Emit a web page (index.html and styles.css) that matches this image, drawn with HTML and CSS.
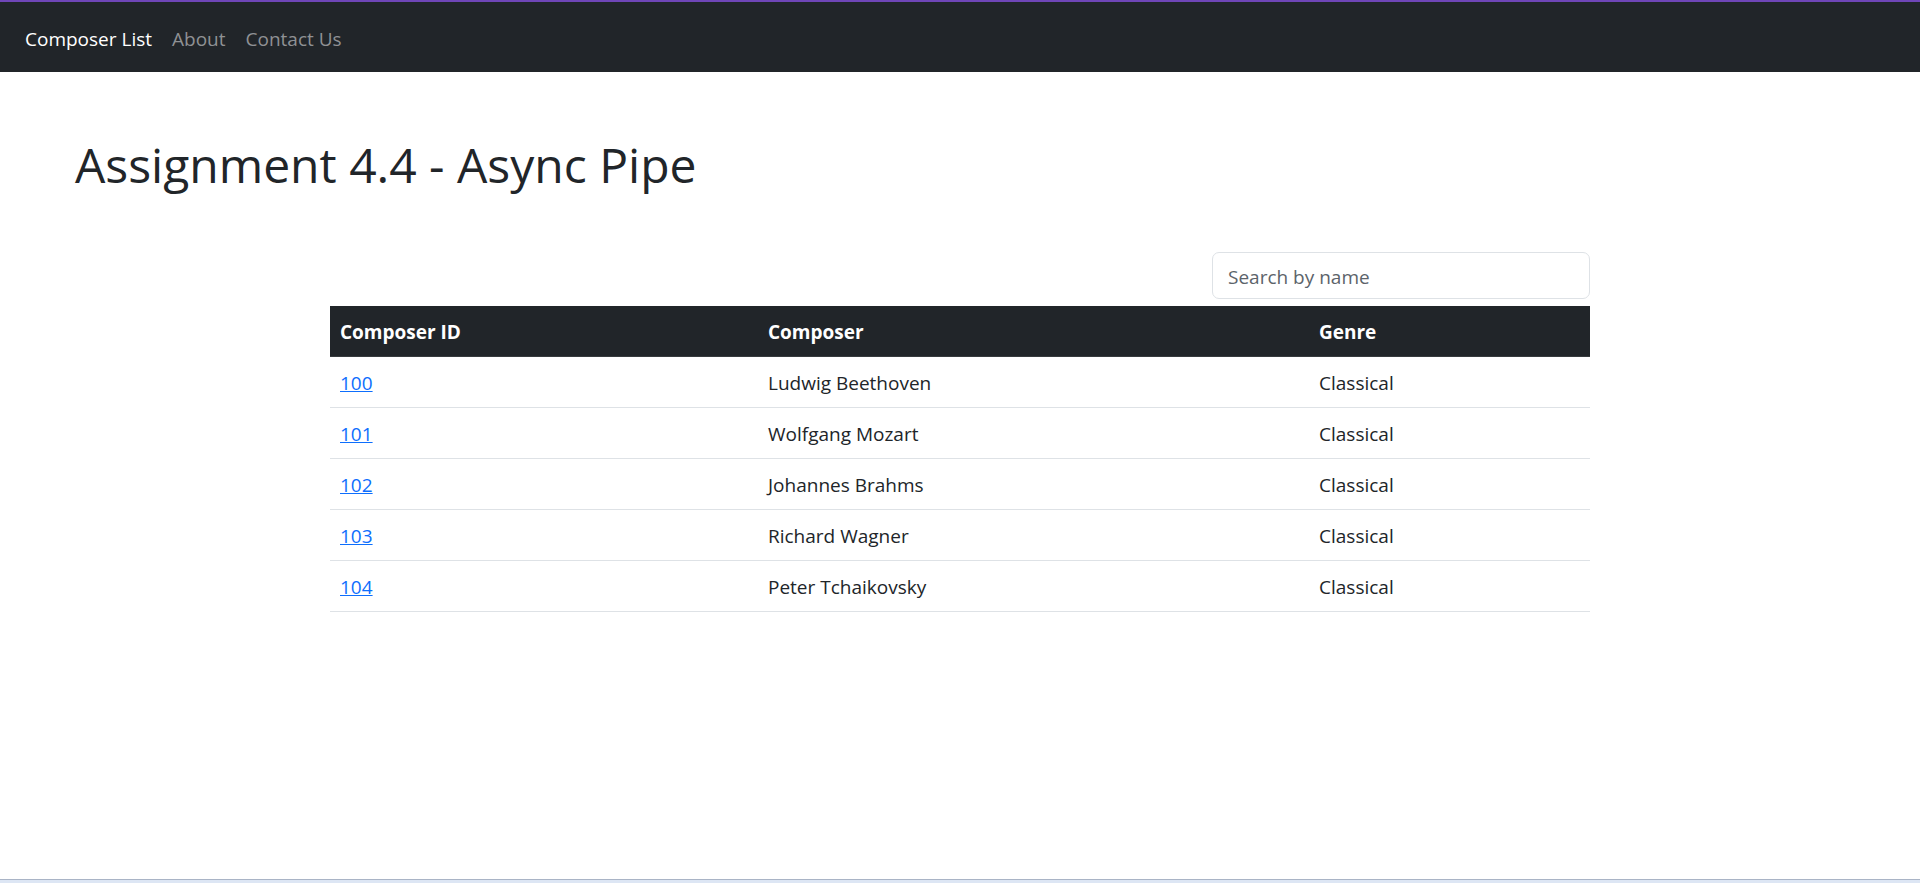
FILE: index.html
```html
<!DOCTYPE html>
<html lang="en">
<head>
<meta charset="utf-8">
<title>Composer List</title>
<link rel="stylesheet" href="styles.css">
</head>
<body>
<div class="page">
  <nav class="navbar">
    <a class="nav-brand" href="#">Composer List</a>
    <a class="nav-link" href="#">About</a>
    <a class="nav-link" href="#">Contact Us</a>
  </nav>
  <main class="content">
    <h1 class="title">Assignment 4.4 - Async Pipe</h1>
    <section class="list">
      <div class="search-row">
        <input class="search" type="text" placeholder="Search by name">
      </div>
      <table class="composers">
        <thead>
          <tr>
            <th class="col-id">Composer ID</th>
            <th class="col-name">Composer</th>
            <th class="col-genre">Genre</th>
          </tr>
        </thead>
        <tbody>
          <tr><td><a href="#">100</a></td><td>Ludwig Beethoven</td><td>Classical</td></tr>
          <tr><td><a href="#">101</a></td><td>Wolfgang Mozart</td><td>Classical</td></tr>
          <tr><td><a href="#">102</a></td><td>Johannes Brahms</td><td>Classical</td></tr>
          <tr><td><a href="#">103</a></td><td>Richard Wagner</td><td>Classical</td></tr>
          <tr><td><a href="#">104</a></td><td>Peter Tchaikovsky</td><td>Classical</td></tr>
        </tbody>
      </table>
    </section>
  </main>
  <div class="bottom-edge"></div>
</div>
</body>
</html>
```
FILE: styles.css
```css
* { box-sizing: border-box; }
html, body { margin: 0; padding: 0; height: 100%; }
body {
  font-family: "Open Sans", "Noto Sans", "Liberation Sans", sans-serif;
  font-size: 19px;
  color: #212529;
  background: #fff;
}
.page {
  height: 883px;
  display: flex;
  flex-direction: column;
}
.navbar {
  height: 72px;
  border-top: 2px solid #6f46b8;
  background: #212529;
  display: flex;
  align-items: center;
  padding: 4px 0 0 25px;
  gap: 20px;
}
.navbar a { text-decoration: none; line-height: 30px; font-size: 19px; }
.nav-brand { color: #fff; }
.nav-link { color: #8f9194; }
.content { flex: 1; }
.title {
  margin: 63px 0 0 75px;
  font-size: 48px;
  font-weight: 400;
  line-height: 60px;
  color: #212529;
}
.list {
  width: 1260px;
  margin: 57px auto 0;
}
.search-row {
  display: flex;
  justify-content: flex-end;
  margin-bottom: 7px;
}
.search {
  width: 378px;
  height: 47px;
  border: 1px solid #dee2e6;
  border-radius: 7px;
  padding: 2px 15px 0;
  font: inherit;
  font-size: 19px;
  color: #212529;
  outline: none;
}
.search::placeholder { color: #5c636a; }
.composers {
  width: 100%;
  border-collapse: collapse;
}
.composers th, .composers td {
  text-align: left;
  padding: 11px 10px 9px;
  line-height: 30px;
  border-bottom: 1px solid #dee2e6;
}
.composers th {
  background: #212529;
  color: #fff;
  font-weight: 700;
  border-bottom-color: #373b3e;
}
.col-id { width: 428px; }
.col-name { width: 551px; }
.col-genre { width: 281px; }
.composers a { color: #0d6efd; text-decoration: underline; }
.bottom-edge {
  height: 4px;
  border-top: 1px solid #a9b4c6;
  background: #dde6f4;
}
```
